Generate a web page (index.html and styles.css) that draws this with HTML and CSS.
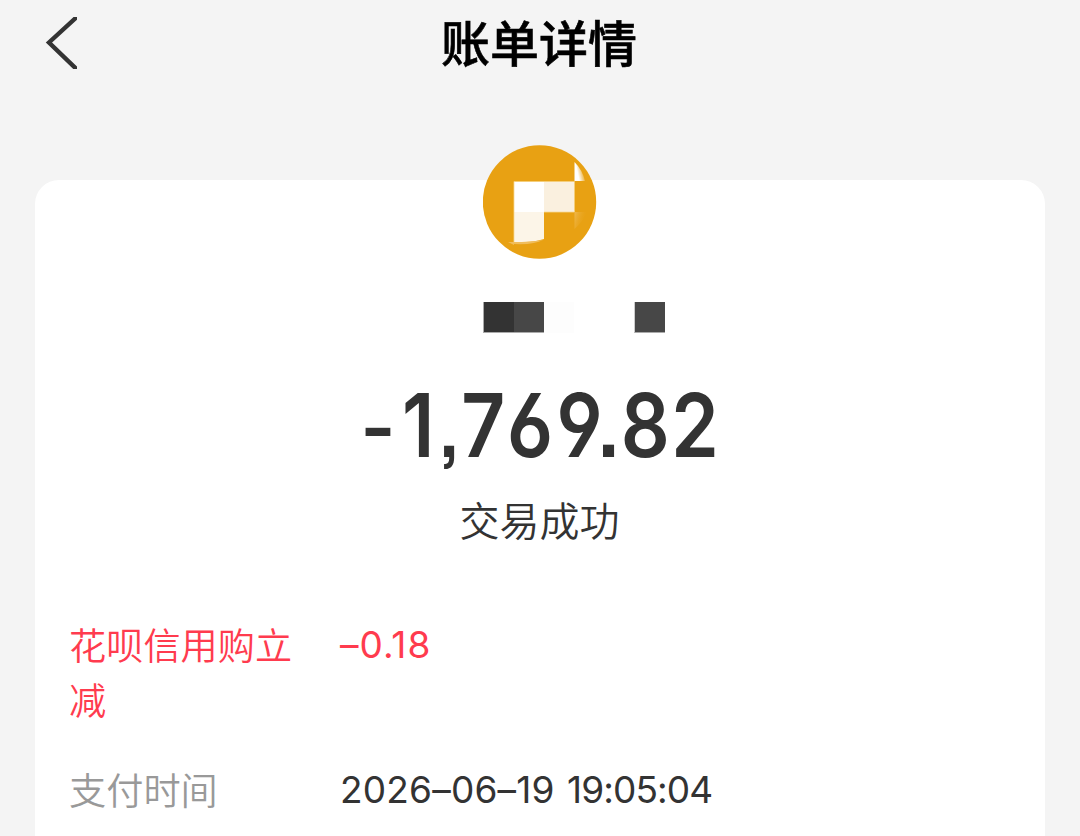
FILE: index.html
```html
<!DOCTYPE html>
<html lang="zh-CN">
<head>
<meta charset="utf-8">
<title>账单详情</title>
<link rel="stylesheet" href="styles.css">
</head>
<body>
<header class="navbar">
  <svg class="back" viewBox="0 0 36 52" aria-hidden="true"><path d="M36-2 6 25.500 36 54.500" /></svg>
  <h1 class="title">账单详情</h1>
</header>
<main class="card">
  <svg class="avatar" viewBox="0 0 114 114" aria-hidden="true">
    <defs>
      <linearGradient id="ray" x1="0" y1="1" x2="1" y2="0.6"><stop offset="0" stop-color="#fff"/><stop offset="0.4" stop-color="#fff"/><stop offset="1" stop-color="#fff" stop-opacity="0"/></linearGradient>
      <linearGradient id="fade" x1="0" y1="0" x2="1" y2="0.4"><stop offset="0" stop-color="#efb84f"/><stop offset="1" stop-color="#e8a113" stop-opacity="0"/></linearGradient>
    </defs>
    <circle cx="56.5" cy="57" r="56.7" fill="#e8a113"/>
    <path fill="#fff" d="M31 37h30v30H31z"/>
    <path fill="#faf0df" d="M61 37h30v30H61z"/>
    <path fill="#fcf5e8" d="M31 67h30v27q-10 3-18 3H31z"/>
    <path fill="none" stroke="#f7d995" stroke-width="0.8" d="M31 97V36.500h60.500v30.500H61"/>
    <path fill="url(#ray)" d="M91.500 17q8 8 10.500 19H91.500z"/>
    <path fill="url(#fade)" d="M91.500 67h12q-2 8-12 17z"/>
    <path fill="#f0bd5c" d="M25 97h6v3zM31 97q16 0 29-2-9 5-29 4z"/>
  </svg>
  <div class="merchant" aria-hidden="true"><i class="tile tile-dark"></i><i class="tile"></i><i class="tile tile-faint"></i><i class="tile tile-last"></i></div>
  <div class="amount"><span class="minus">-</span><span class="one">1</span><span class="comma">,</span><span class="seven">7</span>6<span class="nine">9</span><span class="point">.</span>82</div>
  <div class="status">交易成功</div>
  <dl class="details">
    <div class="row discount"><dt>花呗信用购立减</dt><dd>–0.18</dd></div>
    <div class="row"><dt>支付时间</dt><dd><span class="date">2026–06–19</span> <span class="time">19:05:04</span></dd></div>
  </dl>
</main>
</body>
</html>
```

FILE: styles.css
```css
* { box-sizing: border-box; }
body {
  margin: 0;
  height: 836px;
  overflow: hidden;
  display: flex;
  flex-direction: column;
  background: #f4f4f4;
  color: #333;
  font-family: Inter, "Noto Sans CJK SC", sans-serif;
}
.navbar {
  height: 179.5px;
  flex: none;
  display: grid;
  grid-template-columns: 100px 1fr 100px;
  align-items: start;
}
.back {
  width: 36px;
  height: 52px;
  margin: 17px 0 0 43px;
  clip-path: inset(0 2px 0 0);
}
.back path { fill: none; stroke: #333; stroke-width: 4.4; }
.title {
  margin: 5px 2px 0 0;
  text-align: center;
  color: #000;
  font: 500 49px/72px "Noto Sans CJK SC", sans-serif;
  -webkit-text-stroke: 0.6px #000;
}
.card {
  flex: 1;
  margin: 0 35px;
  padding: 0 35px;
  border-radius: 24px 24px 0 0;
  background: #fff;
  display: flex;
  flex-direction: column;
  align-items: center;
}
.avatar {
  width: 114px;
  height: 114px;
  margin-top: -35px;
  flex: none;
}
.merchant {
  display: flex;
  height: 31px;
  margin: 43.5px 0 0 67px;
}
.tile { width: 30px; height: 31px; background: #474747; border-bottom: 1px solid #aaa; }
.tile-dark { width: 31px; background: #333; border-left: 1px solid #aaa; }
.tile-faint { background: #fdfdfd; border: 0; }
.tile-last { width: 31px; margin-left: 60px; border-left: 1px solid #ccc; }
.amount {
  height: 100px;
  margin: 42px 7px 0 0;
  font: 600 88px/100px Inter, sans-serif;
  font-feature-settings: "cv03", "cv04", "ss07", "tnum";
  font-kerning: none;
  transform: scaleX(0.87);
  white-space: nowrap;
}
.minus { font-weight: 500; letter-spacing: -1px; position: relative; top: 2px; }
.one { font-feature-settings: "tnum" 0; letter-spacing: 6px; }
.comma { font-size: 80px; letter-spacing: 0; }
.seven { letter-spacing: -3px; }
.nine { letter-spacing: -7px; }
.point { letter-spacing: 2px; }
.status {
  margin: 14px 1px 0 0;
  font: 350 40px/60px "Noto Sans CJK SC", sans-serif;
}
.details {
  width: 100%;
  margin: 67px 0 0;
  display: grid;
  gap: 35px;
}
.row {
  display: grid;
  grid-template-columns: 230px 1fr;
  column-gap: 40px;
  font-size: 37px;
  line-height: 55px;
}
.row dt { margin: 1px 0 -1px -1px; color: #999; font: 350 37.2px/55px "Noto Sans CJK SC", sans-serif; }
.row dd { margin: 1px 0 0; font-family: Inter, sans-serif; }
.discount dt, .discount dd { color: #ff3b4e; }
.discount dd { letter-spacing: 1px; }
.date { letter-spacing: 0.2px; }
.time { margin-left: 2px; letter-spacing: -0.9px; }
```
